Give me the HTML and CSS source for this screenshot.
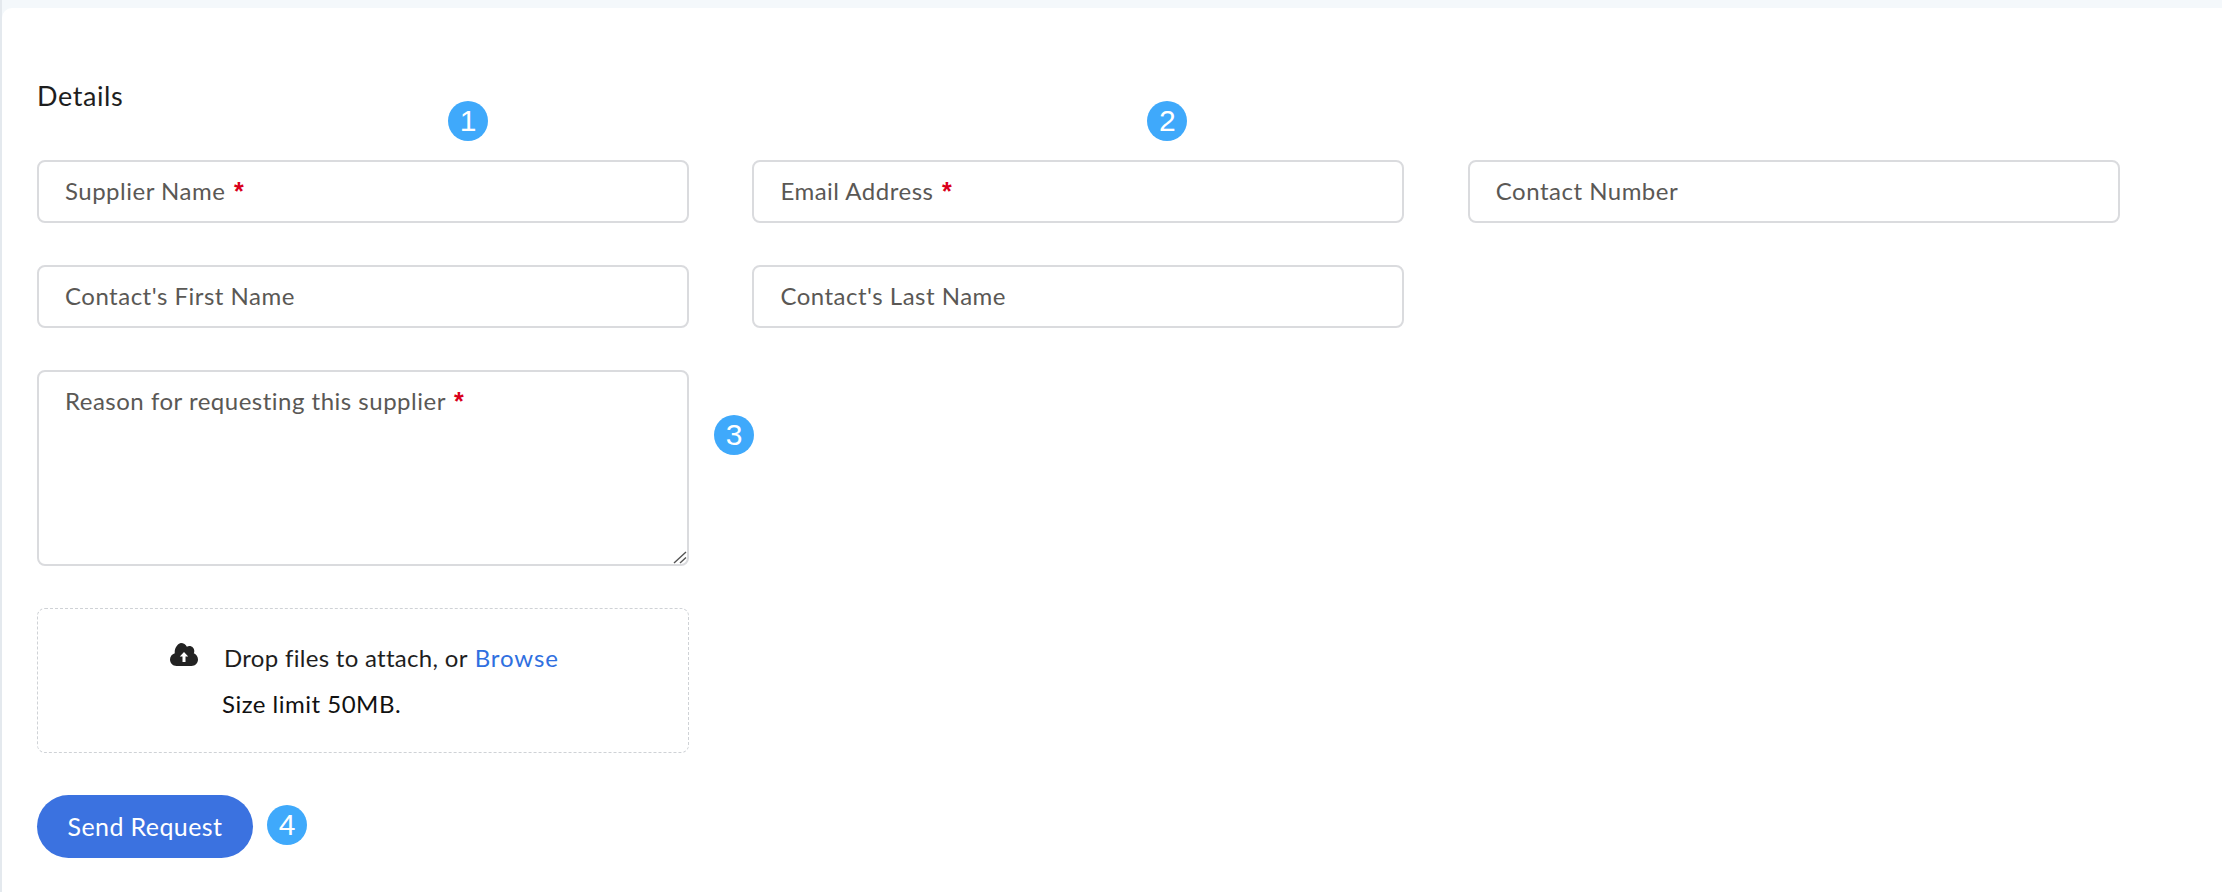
FILE: index.html
```html
<!DOCTYPE html>
<html lang="en">
<head>
<meta charset="utf-8">
<title>Request Supplier</title>
<link rel="stylesheet" href="styles.css">
</head>
<body>
<main class="card">
  <h2 class="title">Details</h2>
  <form class="form">
    <div class="grid">
      <label class="field"><input class="control" type="text"><span class="hint">Supplier Name <b>*</b></span><i class="badge badge-1">1</i></label>
      <label class="field"><input class="control" type="text"><span class="hint">Email Address <b>*</b></span><i class="badge badge-2">2</i></label>
      <label class="field"><input class="control" type="text"><span class="hint">Contact Number</span></label>
      <label class="field"><input class="control" type="text"><span class="hint">Contact's First Name</span></label>
      <label class="field"><input class="control" type="text"><span class="hint">Contact's Last Name</span></label>
    </div>
    <label class="field field-area">
      <textarea class="control area"></textarea>
      <span class="hint hint-area">Reason for requesting this supplier <b>*</b></span>
      <svg class="grip" viewBox="0 0 14 14" aria-hidden="true"><path d="M1 13 13 2M7 13l6-5.500"/></svg>
      <i class="badge badge-3">3</i>
    </label>
    <div class="drop">
      <div class="drop-line">
        <svg class="cloud" viewBox="0 0 28 23" aria-hidden="true">
          <path class="cloud-body" d="M6.500 23C2.900 23 0 20.100 0 16.500c0-3 2-5.500 4.800-6.300C4.700 9.800 4.700 9.400 4.700 9 4.700 4 8.700 0 11 0c2.600 0 4.800 1.500 5.900 3.700C17.600 3.300 18.500 3 19.400 3c2.700 0 4.900 2.200 4.900 4.900 0 .8-.2 1.600-.5 2.300C26.300 11.100 28 13.600 28 16.500 28 20.100 25.100 23 21.500 23z"/>
          <path class="cloud-arrow" d="M14 9 9.800 13.600h2.700V19h3v-5.400h2.700z"/>
        </svg>
        <span class="drop-text">Drop files to attach, or <a class="browse" href="#">Browse</a></span>
      </div>
      <p class="limit">Size limit 50MB.</p>
    </div>
    <div class="actions">
      <button class="send" type="button">Send Request</button>
      <i class="badge badge-4">4</i>
    </div>
  </form>
</main>
</body>
</html>
```
FILE: styles.css
```css
* { box-sizing: border-box; }
html, body { height: 100%; }
body {
  margin: 0;
  padding: 8px 0 0 0;
  background: #f4f8fb;
  border-left: 2px solid #e4e9ee;
  font-family: "Lato", "Open Sans", sans-serif;
  overflow: hidden;
}
.card {
  background: #fff;
  height: 100%;
  padding: 70px 35px 0 35px;
  border-top-left-radius: 10px;
}
.title {
  margin: 0;
  height: 82px;
  font-size: 27px;
  line-height: 36px;
  letter-spacing: .6px;
  font-weight: 400;
  color: #1e1e1e;
}
.grid {
  display: grid;
  grid-template-columns: repeat(3, 652px);
  column-gap: 63.4px;
  row-gap: 42px;
}
.field { position: relative; display: block; }
.control {
  display: block;
  width: 652px;
  height: 63px;
  border: 2px solid #dadbde;
  border-radius: 8px;
  background: #fff;
  outline: none;
  font: inherit;
}
.field-area { width: 652px; margin-top: 42px; }
.area { height: 196px; resize: none; }
.hint {
  position: absolute;
  left: 28px;
  top: 0;
  line-height: 61px;
  font-size: 24px;
  letter-spacing: .5px;
  color: #5a5855;
  pointer-events: none;
}
.hint-area { top: 2px; line-height: 58px; }
.hint b {
  color: #d9001b;
  font: bold 25px/1 "Liberation Sans", Arial, sans-serif;
  letter-spacing: 0;
  margin-left: 2px;
}
.grip {
  position: absolute;
  right: 2px;
  bottom: 2px;
  width: 14px;
  height: 14px;
  fill: none;
  stroke: #555;
  stroke-width: 1.400;
}
.badge {
  position: absolute;
  width: 40px;
  height: 40px;
  border-radius: 50%;
  background: #3fa9fb;
  color: #fff;
  font: normal 30px/40px "Liberation Sans", Arial, sans-serif;
  text-align: center;
}
.badge-1 { left: 411px; top: -59px; }
.badge-2 { left: 395px; top: -59px; }
.badge-3 { left: 677px; top: 45px; }
.drop {
  width: 652px;
  height: 145px;
  margin-top: 42px;
  border: 1.5px dashed #cfd2d6;
  border-radius: 8px;
  padding-top: 32px;
  color: #1e1e1e;
  font-size: 24px;
}
.drop-line { display: flex; align-items: flex-start; margin-left: 132px; height: 34px; line-height: 34px; }
.cloud { width: 28px; height: 23px; margin-top: 2px; margin-right: 26px; }
.cloud-body { fill: #222; }
.cloud-arrow { fill: #fff; }
.drop-text { letter-spacing: .3px; white-space: nowrap; }
.browse { color: #2f6fe0; text-decoration: none; letter-spacing: .9px; margin-left: 1px; }
.limit { margin: 12px 0 0 184px; line-height: 34px; color: #111; letter-spacing: .5px; }
.actions { position: relative; margin-top: 42px; height: 63px; }
.send {
  width: 216px;
  height: 63px;
  padding: 0 0 2px;
  border: 0;
  border-radius: 32px;
  background: #3b72e0;
  color: #fff;
  font: inherit;
  font-size: 25px;
  letter-spacing: .4px;
}
.badge-4 { left: 230px; top: 10px; }
```
